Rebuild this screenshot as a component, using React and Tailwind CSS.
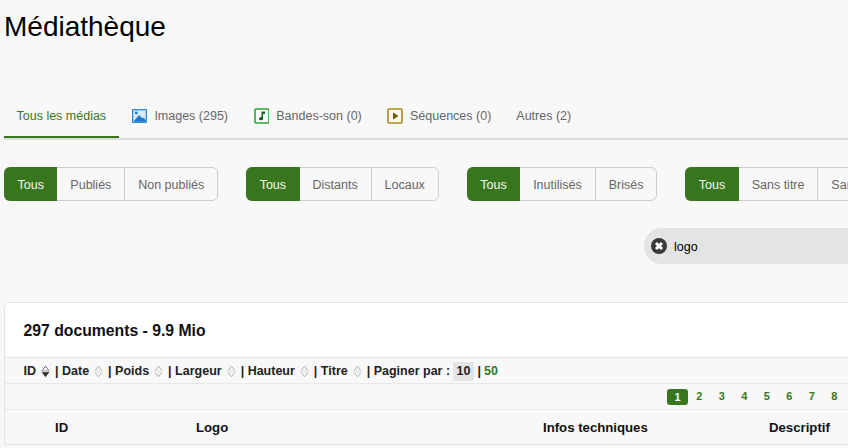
import React from 'react';

const SortIcon = ({ active }) => (
    <svg width="9" height="13" viewBox="0 0 9 13" className="shrink-0">
        <path d="M1 5.7 L4.5 1.2 L8 5.7" fill="none" stroke={active ? '#444' : '#a0a0a0'} strokeWidth="0.8" />
        <path d="M1 5.7 H8" stroke={active ? '#888' : '#d8d8d8'} strokeWidth="0.6" />
        <path d="M1 7.3 H8 L4.5 11.8 Z" fill={active ? '#333' : 'none'} stroke={active ? '#333' : 'none'} strokeWidth="0.6" />
        {!active && <path d="M1 7.3 L4.5 11.8 L8 7.3" fill="none" stroke="#a0a0a0" strokeWidth="0.8" />}
        {!active && <path d="M1 7.3 H8" stroke="#d8d8d8" strokeWidth="0.6" />}
    </svg>
);

const ImageIcon = () => (
    <svg width="16" height="16" viewBox="0 0 16 16" className="shrink-0">
        <rect x="1" y="1" width="15" height="14" rx="1" fill="#2b8ad8" />
        <rect x="2.3" y="2.3" width="12.4" height="11.4" fill="#d6eafa" />
        <path d="M2.3 13.7 L8 7 L11.5 10.5 L12.5 9.5 L14.7 12 V13.7 Z" fill="#1f78c8" />
        <circle cx="5.3" cy="5" r="1.4" fill="#1f78c8" />
    </svg>
);

const AudioIcon = () => (
    <svg width="16" height="16" viewBox="0 0 16 16" className="shrink-0">
        <rect x="2" y="1" width="14" height="14" rx="1" fill="#fff" stroke="#2ba52b" strokeWidth="1.6" />
        <path d="M8.5 3.5 H12 V6 H10 V10.5 A2 1.7 0 1 1 8.5 9 Z" fill="#1c5c1c" />
    </svg>
);

const VideoIcon = () => (
    <svg width="16" height="16" viewBox="0 0 16 16" className="shrink-0">
        <rect x="1" y="1" width="14" height="14" rx="1" fill="#fdf8e8" stroke="#a98a22" strokeWidth="1.6" />
        <path d="M6 4.5 L11.5 8 L6 11.5 Z" fill="#6b5610" />
    </svg>
);

const Tab = ({ icon, label, active }) => (
    <div className={`flex items-center gap-[7.25px] h-[44px] px-[12.5px] pt-[2px] border-b-2 ${active ? 'border-[#38761d] text-[#38761d]' : 'border-transparent text-[#666]'}`}>
        {icon}
        <span>{label}</span>
    </div>
);

const FilterGroup = ({ items }) => (
    <div className="flex h-[34px] shrink-0 rounded-md border border-[#ccc] text-[#666]">
        <div className="flex items-center h-[34px] -my-px -ml-px px-[13.5px] pt-[2px] rounded-l-md bg-[#38761d] text-[#f3f7f1]">Tous</div>
        {items.map((item, i) => (
            <div key={item} className={`flex items-center px-[12.95px] pt-[2px] ${i > 0 ? 'border-l border-[#ccc]' : ''}`}>{item}</div>
        ))}
    </div>
);

const SortLabel = ({ label, active, first }) => (
    <span className="flex items-center gap-[5px] mr-[5px]">
        <span>{first ? '' : '| '}{label}</span>
        <SortIcon active={active} />
    </span>
);

const App = () => (
    <div className="w-[848px] h-[448px] overflow-hidden bg-[#f8f8f8] pl-[4px] text-[12.5px] font-['Liberation_Sans',Arial,sans-serif]">
        <h1 className="text-[28px] leading-[32px] pt-[11px] text-black">Médiathèque</h1>

        <div className="flex w-[900px] h-[44px] mt-[51px] border-b-2 border-[#ddd] box-content">
            <Tab label="Tous les médias" active />
            <Tab icon={<ImageIcon />} label="Images (295)" />
            <Tab icon={<AudioIcon />} label="Bandes-son (0)" />
            <Tab icon={<VideoIcon />} label="Séquences (0)" />
            <Tab label="Autres (2)" />
        </div>

        <div className="flex w-[1000px] gap-[28px] mt-[27px]">
            <FilterGroup items={['Publiés', 'Non publiés']} />
            <FilterGroup items={['Distants', 'Locaux']} />
            <FilterGroup items={['Inutilisés', 'Brisés']} />
            <FilterGroup items={['Sans titre', 'Sans descriptif']} />
        </div>

        <div className="flex items-center gap-[7px] w-[300px] h-[36px] ml-[640px] mt-[27px] pl-[7px] rounded-l-[18px] bg-[#e4e4e4] text-black">
            <svg width="16" height="16" viewBox="0 0 16 16" className="shrink-0">
                <circle cx="8" cy="8" r="8" fill="#3a3a3a" />
                <path d="M5 5 L11 11 M11 5 L5 11" stroke="#fff" strokeWidth="3" />
            </svg>
            <span className="pt-[2px]">logo</span>
        </div>

        <div className="w-[1000px] mt-[38px] rounded-t-md border border-[#e4e4e4] bg-white">
            <div className="h-[54px] pl-[18.5px] pt-[18px] text-[15.75px] leading-[20px] font-bold text-[#111]">297 documents - 9.9 Mio</div>
            <div className="flex items-center h-[27px] pl-[18.5px] pt-[1px] bg-[#f8f8f8] border-y border-[#e8e8e8] font-bold text-[#222]">
                <SortLabel label="ID" active first />
                <SortLabel label="Date" />
                <SortLabel label="Poids" />
                <SortLabel label="Largeur" />
                <SortLabel label="Hauteur" />
                <SortLabel label="Titre" />
                <span>| Paginer par :</span>
                <span className="ml-[3px] px-[3.5px] leading-[19px] -my-px bg-[#e4e4e4]">10</span>
                <span className="ml-[3.5px]">|</span>
                <span className="ml-[3px] text-[#38761d]">50</span>
            </div>
            <div className="flex items-center h-[26px] pl-[662px] bg-[#f8f8f8] border-b border-[#e8e8e8] text-[11px] font-bold text-[#38761d]">
                <span className="w-[21px] h-[16px] rounded-[3px] bg-[#38761d] text-white text-center leading-[16px]">1</span>
                {[2, 3, 4, 5, 6, 7, 8, 9].map((n) => (
                    <span key={n} className="w-[22.5px] text-center">{n}</span>
                ))}
            </div>
            <div className="flex items-center h-[34px] pt-[2px] bg-[#f8f8f8] text-[13.2px] font-bold text-[#111]">
                <span className="ml-[50px] w-[141px]">ID</span>
                <span className="w-[347px]">Logo</span>
                <span className="w-[226px]">Infos techniques</span>
                <span>Descriptif</span>
            </div>
        </div>
    </div>
);

export default App;
